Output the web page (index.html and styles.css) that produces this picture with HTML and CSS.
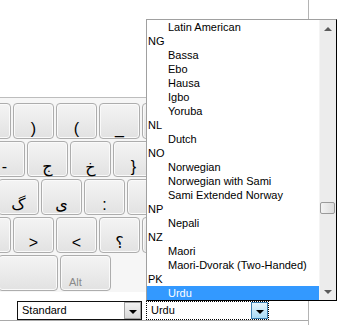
FILE: index.html
```html
<!DOCTYPE html>
<html>
<head>
    <title>On-Screen Keyboard</title>
    <link rel="stylesheet" href="styles.css">
</head>
<body>
    <div class="screen">
        <div class="panel">
            <div class="keyboard">
                <div class="key-row shift-a">
                    <div class="key"></div>
                    <div class="key">)</div>
                    <div class="key">(</div>
                    <div class="key">_</div>
                    <div class="key"></div>
                </div>
                <div class="key-row shift-b">
                    <div class="key">-</div>
                    <div class="key">ج</div>
                    <div class="key">خ</div>
                    <div class="key">}</div>
                </div>
                <div class="key-row shift-c">
                    <div class="key">گ</div>
                    <div class="key">ی</div>
                    <div class="key">:</div>
                    <div class="key"></div>
                </div>
                <div class="key-row shift-a">
                    <div class="key"></div>
                    <div class="key">&gt;</div>
                    <div class="key">&lt;</div>
                    <div class="key">؟</div>
                    <div class="key"></div>
                </div>
                <div class="key-row shift-c">
                    <div class="key wide"></div>
                    <div class="key mod">Alt</div>
                </div>
            </div>
            <div class="options">
                <div class="combo standard">
                    <span class="combo-text">Standard</span>
                    <span class="drop"><span class="arrow"></span></span>
                </div>
                <div class="combo layout">
                    <span class="combo-text">Urdu</span>
                    <span class="drop hot"><span class="arrow"></span></span>
                </div>
            </div>
            <div class="rule"></div>
        </div>

        <!-- open list of the layout combo -->
        <div class="popup">
            <ul class="list">
                <li class="item">Latin American</li>
                <li class="group">NG</li>
                <li class="item">Bassa</li>
                <li class="item">Ebo</li>
                <li class="item">Hausa</li>
                <li class="item">Igbo</li>
                <li class="item">Yoruba</li>
                <li class="group">NL</li>
                <li class="item">Dutch</li>
                <li class="group">NO</li>
                <li class="item">Norwegian</li>
                <li class="item">Norwegian with Sami</li>
                <li class="item">Sami Extended Norway</li>
                <li class="group">NP</li>
                <li class="item">Nepali</li>
                <li class="group">NZ</li>
                <li class="item">Maori</li>
                <li class="item">Maori-Dvorak (Two-Handed)</li>
                <li class="group">PK</li>
                <li class="item selected">Urdu</li>
            </ul>
            <div class="scrollbar">
                <span class="sb-arrow up"></span>
                <div class="track"><span class="thumb"></span></div>
                <span class="sb-arrow down"></span>
            </div>
        </div>
    </div>
</body>
</html>
```

FILE: styles.css
```css
body {
    margin: 0;
    padding: 0;
    background-color: #fff;
    font-family: "Liberation Sans", Arial, sans-serif;
    font-size: 11px;
    color: #000;
}

.screen {
    position: relative;
    width: 346px;
    height: 325px;
    overflow: hidden;
}

.panel {
    width: 309px;
    height: 325px;
    padding-top: 97px;
    border-right: 1px solid #b4b4b4;
    box-sizing: border-box;
    overflow: hidden;
}

.keyboard {
    display: flex;
    flex-direction: column;
    gap: 2px;
    padding-top: 5px;
    border-top: 1px solid #bdbdbd;
    background-color: #f6f6f6;
    height: 195px;
    box-sizing: border-box;
}

.key-row {
    display: flex;
    gap: 2px;
}

.shift-a { margin-left: -30px; }
.shift-b { margin-left: -16px; }
.shift-c { margin-left: -2px; }

.key {
    flex: none;
    width: 41px;
    height: 36px;
    box-sizing: border-box;
    padding-top: 16px;
    border: 1px solid #adadad;
    border-radius: 4px;
    background: linear-gradient(#f4f4f4, #e2e2e2);
    box-shadow: inset 0 0 0 1px #fafafa;
    text-align: center;
    font-family: "Liberation Sans", "DejaVu Sans", sans-serif;
    font-size: 16px;
    line-height: 17px;
}

.key.wide {
    width: 60px;
}

.key.mod {
    width: 51px;
    padding-left: 8px;
    padding-top: 19px;
    text-align: left;
    font-size: 11px;
    line-height: 15px;
    color: #8a8a8a;
}

.options {
    display: flex;
    gap: 4px;
    padding-left: 17px;
    margin-top: 9px;
}

.combo {
    display: flex;
    align-items: center;
    justify-content: space-between;
    height: 19px;
    box-sizing: border-box;
    border: 1px solid #111;
    background-color: #fff;
}

.combo.standard { width: 125px; }

.combo.layout {
    width: 123px;
    border: 1px dotted #000;
}

.combo-text {
    padding-left: 4px;
    line-height: 17px;
}

.drop {
    display: flex;
    align-items: center;
    justify-content: center;
    width: 17px;
    height: 17px;
    box-sizing: border-box;
    border: 1px solid #a2a2a2;
    background: linear-gradient(#f2f2f2, #d8d8d8);
}

.drop.hot {
    border-color: #3c7fb1;
    background: linear-gradient(#e3f4fc, #a9dbf6);
}

.arrow {
    width: 0;
    height: 0;
    margin-top: 2px;
    border-left: 4px solid transparent;
    border-right: 4px solid transparent;
    border-top: 4px solid #000;
}

.rule {
    height: 1px;
    background-color: #a9a9a9;
}

.popup {
    position: absolute;
    left: 146px;
    top: 19px;
    width: 191px;
    height: 282px;
    display: flex;
    box-sizing: border-box;
    border-top: 1px solid #a0a0a0;
    border-left: 1px solid #a0a0a0;
    border-right: 1px solid #000;
    border-bottom: 1px solid #000;
    background-color: #fff;
}

.list {
    flex: 1;
    margin: 0;
    padding: 0;
    list-style: none;
}

.list li {
    height: 14px;
    line-height: 14px;
    padding-left: 1px;
    white-space: nowrap;
}

.list .item {
    padding-left: 21px;
}

.list .selected {
    background-color: #3399ff;
    color: #fff;
}

.scrollbar {
    width: 16px;
    display: flex;
    flex-direction: column;
    align-items: center;
    background-color: #ececec;
    border-left: 1px solid #f4f4f4;
}

.sb-arrow {
    height: 17px;
    display: flex;
    align-items: center;
}

.sb-arrow.up::before,
.sb-arrow.down::before {
    content: "";
    border-left: 4px solid transparent;
    border-right: 4px solid transparent;
}

.sb-arrow.up::before {
    border-bottom: 4px solid #5a5a5a;
}

.sb-arrow.down::before {
    border-top: 4px solid #5a5a5a;
}

.track {
    flex: 1;
    width: 100%;
    padding-top: 165px;
}

.thumb {
    display: block;
    width: 15px;
    height: 12px;
    box-sizing: border-box;
    border: 1px solid #9a9a9a;
    border-radius: 2px;
    background: linear-gradient(90deg, #f3f3f3, #dcdcdc);
}
```
